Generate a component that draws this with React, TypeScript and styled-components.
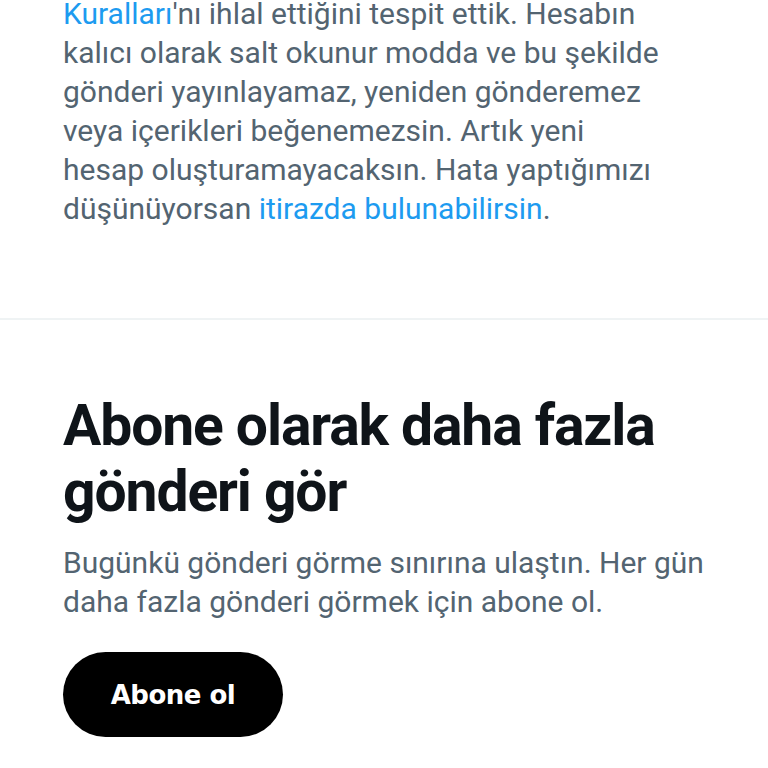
import styled, { createGlobalStyle } from "styled-components";

const GlobalStyle = createGlobalStyle`
    html, body {
        margin: 0;
        padding: 0;
        background: #ffffff;
        overflow: hidden;
    }
    body {
        font-family: Roboto, "Noto Sans", sans-serif;
        -webkit-font-smoothing: antialiased;
    }
`;

export default function App() {
    return (
        <>
            <GlobalStyle />
            <Page>
                <NoticeSection>
                    <Body $pullUp>
                        <Link>Kuralları</Link>'nı ihlal ettiğini tespit ettik. Hesabın<br />
                        kalıcı olarak salt okunur modda ve bu şekilde<br />
                        gönderi yayınlayamaz, yeniden gönderemez<br />
                        veya içerikleri beğenemezsin. Artık yeni<br />
                        hesap oluşturamayacaksın. Hata yaptığımızı<br />
                        düşünüyorsan <Link>itirazda bulunabilirsin</Link>.
                    </Body>
                </NoticeSection>
                <SubscribeSection>
                    <Title>
                        Abone olarak daha fazla<br />
                        gönderi gör
                    </Title>
                    <Body>
                        Bugünkü gönderi görme sınırına ulaştın. Her gün<br />
                        daha fazla gönderi görmek için abone ol.
                    </Body>
                    <SubscribeButton>Abone ol</SubscribeButton>
                </SubscribeSection>
            </Page>
        </>
    );
}

const Page = styled.div`
    width: 768px;
    height: 768px;
    display: flex;
    flex-direction: column;
`;

const NoticeSection = styled.section`
    padding: 0 63px 90px;
    border-bottom: 2px solid #eff3f4;
`;

const SubscribeSection = styled.section`
    padding: 73px 63px 0;
    display: flex;
    flex-direction: column;
    align-items: flex-start;
`;

const Body = styled.p<{ $pullUp?: boolean }>`
    margin: ${({ $pullUp }) => ($pullUp ? "-6px 0 0" : "18px 0 0")};
    font-size: 30px;
    line-height: 39px;
    color: #536471;
    white-space: nowrap;
`;

const Link = styled.span`
    color: #1d9bf0;
`;

const Title = styled.h1`
    margin: 0;
    font-size: 57px;
    line-height: 66px;
    font-weight: 700;
    color: #0f1419;
    letter-spacing: -1.1px;
    white-space: nowrap;
`;

const SubscribeButton = styled.button`
    margin-top: 31px;
    width: 220px;
    height: 85px;
    border: none;
    border-radius: 43px;
    background: #000000;
    color: #ffffff;
    font-family: "DejaVu Sans", Roboto, sans-serif;
    font-size: 26px;
    font-weight: 700;
    letter-spacing: -0.5px;
    cursor: pointer;
`;
